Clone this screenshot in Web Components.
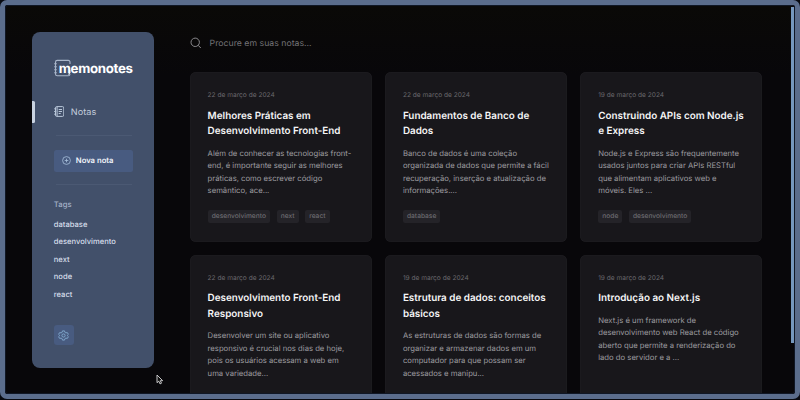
<!DOCTYPE html>
<html lang="pt-BR">
<head>
<meta charset="utf-8">
<title>memonotes</title>
<style>
html,body{margin:0;width:800px;height:400px;overflow:hidden;background:#080a10;font-family:Inter,"Liberation Sans",sans-serif;text-rendering:geometricPrecision}
</style>
</head>
<body>
<memo-app></memo-app>
<script>
const define=(name,html,setup)=>customElements.define(name,class extends HTMLElement{
  connectedCallback(){
    if(this.shadowRoot)return;
    const root=this.attachShadow({mode:'open'});
    const t=document.createElement('template');
    t.innerHTML=html;
    root.append(t.content.cloneNode(true));
    if(setup)setup(this,root);
  }
});

define('memo-logo',`<style>
:host{display:flex;align-items:center;position:relative;height:18px;color:#fff}
svg{position:absolute;left:0;top:0}
b{position:relative;font-size:13.3px;line-height:18px;font-weight:700;letter-spacing:-.34px;margin-left:5px;padding-top:1px;white-space:nowrap}
</style>
<svg width="18" height="18" viewBox="0 0 18 18" fill="none" stroke="#a9b6ca" stroke-width="1.100"><path d="M16 5V3.2Q16 1.400 14.200 1.400H3.300Q1.500 1.400 1.500 3.200V15Q1.500 16.800 3.300 16.800H14.200Q16 16.800 16 15"/><path d="M.2 4.700H2.800M.2 7.700H2.800M.2 10.700H2.800M.2 13.700H2.800"/><path stroke="#e4eaf2" stroke-width="1.300" d="M15.700 11V13.700Q15.700 15.200 14.200 15.200"/></svg><b>memonotes</b>`);

define('nav-item',`<style>
:host{display:flex;align-items:center;gap:6.500px;height:22px;position:relative;color:#c3cddc;font-size:9.1px;letter-spacing:.04px}
i{position:absolute;left:-22px;top:0;width:3.5px;height:22px;background:#c9d3e1;border-radius:0 1.500px 1.500px 0}
span{padding-top:1.500px}
</style><i></i>
<svg width="10.500" height="11" viewBox="0 0 10.500 11" fill="none" stroke="#b9c7d9" stroke-width="1"><rect x="1.500" y=".6" width="8.300" height="9.800" rx="1.300"/><path d="M.2 2.800H2.200M.2 5.500H2.200M.2 8.200H2.200M4.700 3.500H8M4.700 5.500H8M4.700 7.500H6.700M3.100 1V10"/></svg><span><slot></slot></span>`);

define('new-note',`<style>
:host{display:flex;align-items:center;gap:4.500px;height:22px;box-sizing:border-box;padding-left:8.500px;background:#485b80;border-radius:2.500px;color:#f0f4fa;font-size:7.7px;font-weight:600}
</style>
<svg width="9" height="9" viewBox="0 0 9 9" fill="none" stroke="#a8c0dc" stroke-width=".8"><circle cx="4.500" cy="4.500" r="3.900"/><path d="M4.500 2.700V6.300M2.700 4.500H6.300"/></svg><slot></slot>`);

define('tag-list',`<style>
:host{display:block;white-space:nowrap;font-size:7.6px;color:#d6deea}
h4{margin:0 0 5px;font-size:7.700px;line-height:12px;font-weight:500;color:#a5b2c8;letter-spacing:.05px}
div{line-height:17.500px;font-weight:500}
</style><h4>Tags</h4><section></section>`,(el,root)=>{
  for(const s of el.getAttribute('items').split(',')){
    const d=document.createElement('div');d.textContent=s;root.querySelector('section').append(d);
  }
});

define('settings-button',`<style>
:host{display:flex;align-items:center;justify-content:center;width:20px;height:20px;background:#485b80;border-radius:3px}
</style>
<svg width="11" height="11" viewBox="0 0 24 24" fill="none" stroke="#82abcf" stroke-width="2" stroke-linejoin="round"><path d="M9.700 2h4.600l.7 3.100 2.300 1.300 3-.9 2.300 4-2.300 2.200v.6l2.300 2.200-2.300 4-3-.9-2.300 1.300-.7 3.100H9.700L9 18.900l-2.300-1.300-3 .9-2.300-4 2.300-2.200v-.6L1.400 9.500l2.300-4 3 .9L9 5.100z"/><circle cx="12" cy="12" r="3.500"/></svg>`);

define('side-bar',`<style>
:host{display:block;box-sizing:border-box;width:122.500px;height:335.500px;padding:27px 22px 0;background:#42506a;border-radius:8px}
nav-item{margin-top:23.500px}
hr{border:0;height:1px;margin:12.500px 0 13.500px 2px;background:#4b5973}
new-note{width:79px}
settings-button{margin-top:22px}
</style>
<memo-logo></memo-logo><nav-item>Notas</nav-item><hr>
<new-note>Nova nota</new-note><hr>
<tag-list items="database,desenvolvimento,next,node,react"></tag-list>
<settings-button></settings-button>`);

define('search-field',`<style>
:host{display:flex;align-items:center;gap:9px;height:12px;color:#737276;font-size:8.7px;letter-spacing:.02px}
span{padding-top:1.500px}
</style>
<svg width="11" height="12" viewBox="0 0 11 12" fill="none" stroke="#8b8a8e" stroke-width="1"><circle cx="5.200" cy="5.300" r="4.200"/><path d="M8.200 8.300L10.800 11"/></svg><span><slot></slot></span>`);

define('note-tag',`<style>
:host{display:block;height:13px;line-height:13.500px;padding:0 4.100px;background:#242328;border-radius:2px;color:#6c6b70;font-size:6.650px;font-weight:500}
</style><slot></slot>`);

define('note-card',`<style>
:host{display:block;box-sizing:border-box;height:169.500px;padding:18px 0 0 18px;background:#18171b;border-radius:6px;white-space:nowrap;box-shadow:inset 0 0 0 .6px #1f1e22}
time{display:block;font-size:6.6px;line-height:10px;color:#68676c}
h3{margin:8.600px 0 8px;font-size:9.9px;line-height:15.600px;font-weight:600;color:#f4f4f5}
p{margin:0;font-size:7.700px;line-height:12.400px;color:#9d9ca0}
footer{display:flex;gap:6.500px;margin-top:13px}
</style><time></time><h3><slot name="title"></slot></h3><p><slot></slot></p><footer></footer>`,(el,root)=>{
  root.querySelector('time').textContent=el.getAttribute('date');
  for(const s of (el.getAttribute('tags')||'').split(',').filter(Boolean)){
    const t=document.createElement('note-tag');t.textContent=s;root.querySelector('footer').append(t);
  }
});

define('mouse-pointer',`<style>:host{position:absolute;left:151px;top:369px;width:8px;height:11px}svg{display:block}</style>
<svg width="8" height="11" viewBox="0 0 8 11"><path d="M1 1V8.700L2.800 7.200 4 9.900 5.500 9.200 4.300 6.700H6.700Z" fill="#111" stroke="#d8d8da" stroke-width=".9" stroke-linejoin="round"/></svg>`);

define('memo-app',`<style>
:host{display:block;position:relative;box-sizing:border-box;width:800px;height:399px;border:5px solid #5b6d8c;border-radius:7px;background:#08070a}
.view{box-sizing:border-box;height:389px;border:1px solid #101725;border-radius:3px;overflow:hidden;display:flex;background:linear-gradient(#0a0907,#08070a 70px)}
side-bar{margin:26px 0 0 25.800px;flex:none}
main{margin:31px 0 0 35.300px;width:573px;flex:none}
.grid{display:grid;grid-template-columns:repeat(3,182.300px);gap:13px;margin-top:23px}
.bar{position:absolute;right:1px;top:2px;width:3px;height:336px;background:#7698be}
</style>
<div class="view"><side-bar></side-bar><main>
<search-field>Procure em suas notas...</search-field>
<div class="grid">
<note-card date="22 de março de 2024" tags="desenvolvimento,next,react"><span slot="title">Melhores Práticas em<br>Desenvolvimento Front-End</span>Além de conhecer as tecnologias front-<br>end, é importante seguir as melhores<br>práticas, como escrever código<br>semântico, ace...</note-card>
<note-card date="22 de março de 2024" tags="database"><span slot="title">Fundamentos de Banco de<br>Dados</span>Banco de dados é uma coleção<br>organizada de dados que permite a fácil<br>recuperação, inserção e atualização de<br>informações....</note-card>
<note-card date="19 de março de 2024" tags="node,desenvolvimento"><span slot="title">Construindo APIs com Node.js<br>e Express</span>Node.js e Express são frequentemente<br>usados juntos para criar APIs RESTful<br>que alimentam aplicativos web e<br>móveis. Eles ...</note-card>
<note-card date="22 de março de 2024"><span slot="title">Desenvolvimento Front-End<br>Responsivo</span>Desenvolver um site ou aplicativo<br>responsivo é crucial nos dias de hoje,<br>pois os usuários acessam a web em<br>uma variedade...</note-card>
<note-card date="19 de março de 2024"><span slot="title">Estrutura de dados: conceitos<br>básicos</span>As estruturas de dados são formas de<br>organizar e armazenar dados em um<br>computador para que possam ser<br>acessados e manipu...</note-card>
<note-card date="19 de março de 2024"><span slot="title">Introdução ao Next.js</span>Next.js é um framework de<br>desenvolvimento web React de código<br>aberto que permite a renderização do<br>lado do servidor e a ...</note-card>
</div></main></div>
<div class="bar"></div><mouse-pointer></mouse-pointer>`);
</script>
</body>
</html>
